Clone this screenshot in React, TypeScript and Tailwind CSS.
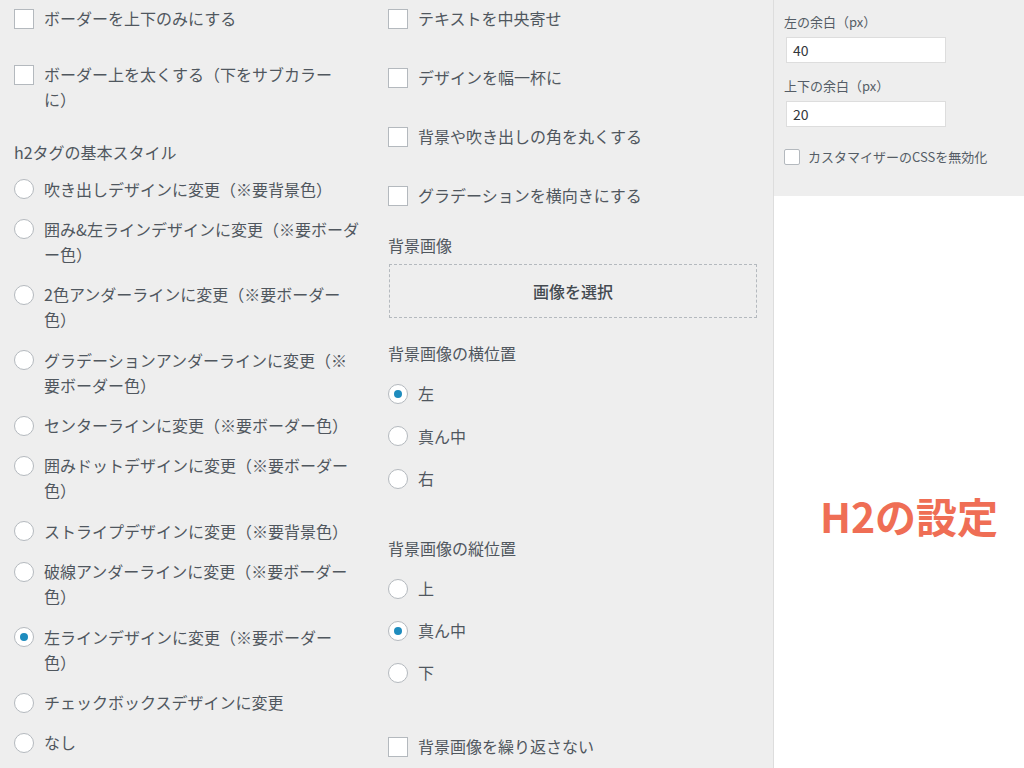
import React from "react";

const FONT = '"Noto Sans CJK JP", "Noto Sans", sans-serif';

function Lines({ lines }: { lines: string[] }) {
  return (
    <>
      {lines.map((l, i) => (
        <span key={i} className="block whitespace-nowrap">
          {l}
        </span>
      ))}
    </>
  );
}

function Check({ lines, small }: { lines: string[]; small?: boolean }) {
  if (small) {
    return (
      <div className="flex items-start gap-[8px]">
        <span className="block h-[16px] w-[16px] shrink-0 rounded-[2px] border border-[#b4b9be] bg-white" />
        <span className="text-[13px] leading-[16px] text-[#555d66]">
          <Lines lines={lines} />
        </span>
      </div>
    );
  }
  return (
    <div className="flex items-start gap-[10px]">
      <span className="mt-[3px] block h-[20px] w-[20px] shrink-0 border border-[#b4b9be] bg-white" />
      <span className="text-[16px] leading-[25px] text-[#50575e]">
        <Lines lines={lines} />
      </span>
    </div>
  );
}

function Radio({ lines, checked }: { lines: string[]; checked?: boolean }) {
  return (
    <div className="flex items-start gap-[10px]">
      <span className="mt-[2.5px] flex h-[20px] w-[20px] shrink-0 items-center justify-center rounded-full border border-[#b4b9be] bg-white">
        {checked && <span className="block h-[8px] w-[8px] rounded-full bg-[#1e8cbe]" />}
      </span>
      <span className="text-[16px] leading-[25px] text-[#50575e]">
        <Lines lines={lines} />
      </span>
    </div>
  );
}

export default function App() {
  const radios: [string[], boolean][] = [
    [["吹き出しデザインに変更（※要背景色）"], false],
    [["囲み&左ラインデザインに変更（※要ボーダ", "ー色）"], false],
    [["2色アンダーラインに変更（※要ボーダー", "色）"], false],
    [["グラデーションアンダーラインに変更（※", "要ボーダー色）"], false],
    [["センターラインに変更（※要ボーダー色）"], false],
    [["囲みドットデザインに変更（※要ボーダー", "色）"], false],
    [["ストライプデザインに変更（※要背景色）"], false],
    [["破線アンダーラインに変更（※要ボーダー", "色）"], false],
    [["左ラインデザインに変更（※要ボーダー", "色）"], true],
    [["チェックボックスデザインに変更"], false],
    [["なし"], false],
  ];
  return (
    <div className="flex h-[768px] w-[1024px] overflow-hidden bg-[#eeeeee]" style={{ fontFamily: FONT }}>
      {/* Column 1 */}
      <div className="flex w-[374px] shrink-0 flex-col pl-[14px] pt-[5.5px]">
        <Check lines={["ボーダーを上下のみにする"]} />
        <div className="mt-[31px]">
          <Check lines={["ボーダー上を太くする（下をサブカラー", "に）"]} />
        </div>
        <div className="mt-[28px] text-[16px] leading-[25px] text-[#50575e]">h2タグの基本スタイル</div>
        <div className="mt-[12px] flex flex-col gap-[15.4px]">
          {radios.map(([l, c], i) => (
            <Radio key={i} lines={l} checked={c} />
          ))}
        </div>
      </div>

      {/* Column 2 */}
      <div className="flex w-[399px] shrink-0 flex-col pl-[14px] pr-[16px] pt-[5.5px]">
        <div className="flex flex-col gap-[34px]">
          <Check lines={["テキストを中央寄せ"]} />
          <Check lines={["デザインを幅一杯に"]} />
          <Check lines={["背景や吹き出しの角を丸くする"]} />
          <Check lines={["グラデーションを横向きにする"]} />
        </div>
        <div className="mt-[25px] text-[16px] leading-[25px] text-[#50575e]">背景画像</div>
        <div className="ml-[1px] mt-[6.5px] flex h-[54px] items-center justify-center border border-dashed border-[#b4b9be] text-[16px] font-medium text-[#444a50]">
          画像を選択
        </div>
        <div className="mt-[23px] text-[16px] leading-[25px] text-[#50575e]">背景画像の横位置</div>
        <div className="mt-[15px] flex flex-col gap-[17.5px]">
          <Radio lines={["左"]} checked />
          <Radio lines={["真ん中"]} />
          <Radio lines={["右"]} />
        </div>
        <div className="mt-[45px] text-[16px] leading-[25px] text-[#50575e]">背景画像の縦位置</div>
        <div className="mt-[15px] flex flex-col gap-[17px]">
          <Radio lines={["上"]} />
          <Radio lines={["真ん中"]} checked />
          <Radio lines={["下"]} />
        </div>
        <div className="mt-[49px]">
          <Check lines={["背景画像を繰り返さない"]} />
        </div>
      </div>

      {/* Right panel */}
      <div className="flex flex-1 flex-col border-l border-[#dddddd]">
        <div className="h-[196px] bg-[#eeeeee] pl-[10px] pt-[13px]">
          <div className="text-[13px] leading-[18px] text-[#555d66]">左の余白（px）</div>
          <div className="ml-[2px] mt-[6px] flex h-[26px] w-[160px] items-center border border-[#dddddd] bg-white pl-[6px] text-[14px] text-[#32373c]">
            40
          </div>
          <div className="mt-[14px] text-[13px] leading-[18px] text-[#555d66]">上下の余白（px）</div>
          <div className="ml-[2px] mt-[6px] flex h-[26px] w-[160px] items-center border border-[#dddddd] bg-white pl-[6px] text-[14px] text-[#32373c]">
            20
          </div>
          <div className="mt-[22px]">
            <Check lines={["カスタマイザーのCSSを無効化"]} small />
          </div>
        </div>
        <div className="flex flex-1 items-center justify-center bg-white pl-[20px] pt-[68px]">
          <span className="text-[41px] font-bold text-[#ef6e55]">H2の設定</span>
        </div>
      </div>
    </div>
  );
}
